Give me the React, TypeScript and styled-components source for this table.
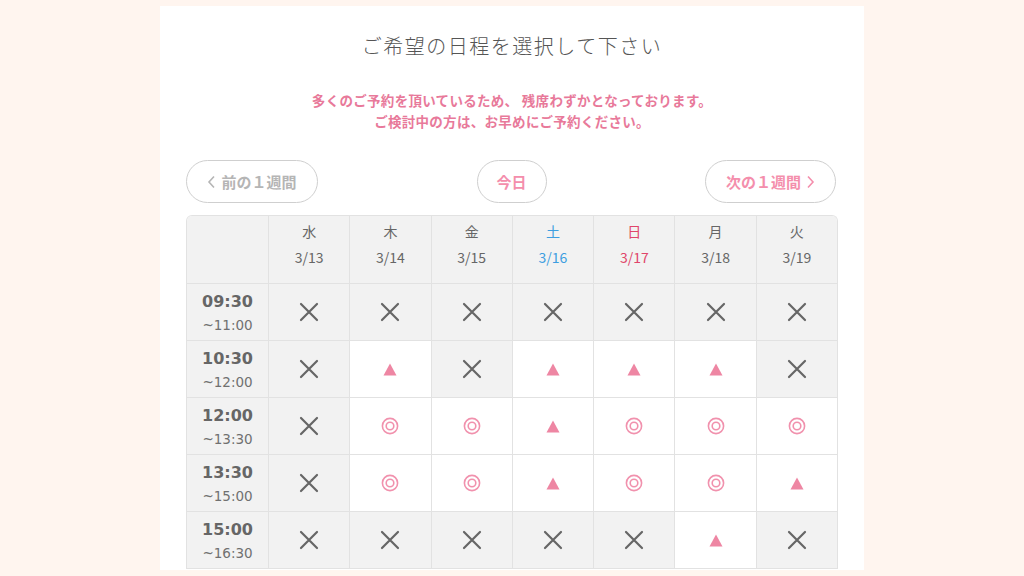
import React from "react";
import styled, { createGlobalStyle } from "styled-components";

const GlobalStyle = createGlobalStyle`
  html, body { margin: 0; padding: 0; }
  body {
    background: #fff5ef;
    font-family: "Noto Sans CJK JP", "Noto Sans", sans-serif;
    color: #555;
  }
`;

const Page = styled.div`
  width: 1024px;
  height: 576px;
  overflow: hidden;
  display: flex;
  justify-content: center;
  padding-top: 6px;
  box-sizing: border-box;
`;

const Panel = styled.div`
  width: 704px;
  height: 564px;
  background: #fff;
  padding: 25px 26px 0;
  box-sizing: border-box;
  display: flex;
  flex-direction: column;
  overflow: hidden;
`;

const Title = styled.h1`
  margin: 0;
  font-size: 20px;
  line-height: 30px;
  font-weight: 300;
  color: #555;
  text-align: center;
  letter-spacing: 1.5px;
`;

const Notice = styled.p`
  margin: 29px 0 0;
  font-size: 13.5px;
  line-height: 21px;
  font-weight: 700;
  color: #e8799a;
  text-align: center;
  letter-spacing: 0.3px;
`;

const Nav = styled.div`
  margin-top: 28px;
  display: flex;
  justify-content: space-between;
  align-items: center;
  padding-right: 2px;
`;

const NavButton = styled.button<{ $tone: "gray" | "pink"; $w: number }>`
  width: ${(p) => p.$w}px;
  height: 43px;
  border-radius: 22px;
  border: 1.5px solid #cfcfcf;
  background: #fff;
  font-family: "Noto Sans CJK JP", sans-serif;
  font-size: 15px;
  font-weight: 700;
  color: ${(p) => (p.$tone === "gray" ? "#b5b5b5" : "#f48eac")};
  display: flex;
  align-items: center;
  justify-content: center;
  gap: 5px;
  padding: 0;
  cursor: pointer;
`;

const Chevron = styled.svg`
  width: 9px;
  height: 14px;
`;

const TableWrap = styled.div`
  margin-top: 12px;
  width: 652px;
  box-sizing: border-box;
  border: 1px solid #e2e2e2;
  border-bottom: none;
  border-radius: 6px 6px 0 0;
  overflow: hidden;
`;

const Grid = styled.div`
  display: grid;
  grid-template-columns: 81px repeat(7, 1fr);
  grid-auto-rows: 57px;
  grid-template-rows: 68px;
`;

const HeadCell = styled.div<{ $color: string }>`
  background: #f2f2f2;
  border-left: 1px solid #e2e2e2;
  border-bottom: 1px solid #e2e2e2;
  display: flex;
  flex-direction: column;
  align-items: center;
  justify-content: flex-start;
  padding-top: 4px;
  gap: 3px;
  font-size: 14px;
  line-height: 23px;
  color: ${(p) => p.$color};
  &:first-child { border-left: none; }
`;

const TimeCell = styled.div`
  background: #f2f2f2;
  border-bottom: 1px solid #e2e2e2;
  display: flex;
  flex-direction: column;
  align-items: center;
  justify-content: center;
  padding-top: 3px;
  box-sizing: border-box;
  font-family: "DejaVu Sans", sans-serif;
  color: #666;
`;

const TimeStart = styled.span`
  font-size: 16px;
  font-weight: 700;
  line-height: 22px;
`;

const TimeEnd = styled.span`
  font-size: 13.5px;
  line-height: 24px;
  color: #707070;
`;

const SlotCell = styled.div<{ $open: boolean }>`
  background: ${(p) => (p.$open ? "#fff" : "#f2f2f2")};
  border-left: 1px solid #e2e2e2;
  border-bottom: 1px solid #e2e2e2;
  display: flex;
  align-items: center;
  justify-content: center;
`;

const Cross = () => (
  <svg width="20" height="20" viewBox="0 0 20 20">
    <path d="M2 2 L18 18 M18 2 L2 18" stroke="#666" strokeWidth="2.2" strokeLinecap="round" />
  </svg>
);

const Tri = () => (
  <svg width="14" height="13" viewBox="0 0 14 13">
    <polygon points="7,0.5 13.5,12.5 0.5,12.5" fill="#ee86a3" />
  </svg>
);

const DoubleCircle = () => (
  <svg width="18" height="18" viewBox="0 0 18 18">
    <circle cx="9" cy="9" r="7.6" fill="none" stroke="#f191ad" strokeWidth="1.6" />
    <circle cx="9" cy="9" r="3.8" fill="none" stroke="#f191ad" strokeWidth="1.6" />
  </svg>
);

type Mark = "x" | "t" | "o";

const days = [
  { w: "水", d: "3/13", c: "#666" },
  { w: "木", d: "3/14", c: "#666" },
  { w: "金", d: "3/15", c: "#666" },
  { w: "土", d: "3/16", c: "#3d9ee0" },
  { w: "日", d: "3/17", c: "#e0456a" },
  { w: "月", d: "3/18", c: "#666" },
  { w: "火", d: "3/19", c: "#666" },
];

const rows: { s: string; e: string; m: Mark[] }[] = [
  { s: "09:30", e: "~11:00", m: ["x", "x", "x", "x", "x", "x", "x"] },
  { s: "10:30", e: "~12:00", m: ["x", "t", "x", "t", "t", "t", "x"] },
  { s: "12:00", e: "~13:30", m: ["x", "o", "o", "t", "o", "o", "o"] },
  { s: "13:30", e: "~15:00", m: ["x", "o", "o", "t", "o", "o", "t"] },
  { s: "15:00", e: "~16:30", m: ["x", "x", "x", "x", "x", "t", "x"] },
];

const MarkIcon = ({ m }: { m: Mark }) =>
  m === "x" ? <Cross /> : m === "t" ? <Tri /> : <DoubleCircle />;

export default function App() {
  return (
    <>
      <GlobalStyle />
      <Page>
        <Panel>
          <Title>ご希望の日程を選択して下さい</Title>
          <Notice>
            多くのご予約を頂いているため、 残席わずかとなっております。
            <br />
            ご検討中の方は、お早めにご予約ください。
          </Notice>
          <Nav>
            <NavButton $tone="gray" $w={132}>
              <Chevron viewBox="0 0 9 14">
                <path d="M7 1.5 L2 7 L7 12.5" fill="none" stroke="#b5b5b5" strokeWidth="1.6" />
              </Chevron>
              前の１週間
            </NavButton>
            <NavButton $tone="pink" $w={70}>今日</NavButton>
            <NavButton $tone="pink" $w={131}>
              次の１週間
              <Chevron viewBox="0 0 9 14">
                <path d="M2 1.5 L7 7 L2 12.5" fill="none" stroke="#f48eac" strokeWidth="1.6" />
              </Chevron>
            </NavButton>
          </Nav>
          <TableWrap>
            <Grid>
              <HeadCell $color="#666" />
              {days.map((d) => (
                <HeadCell key={d.d} $color={d.c}>
                  <span>{d.w}</span>
                  <span>{d.d}</span>
                </HeadCell>
              ))}
              {rows.map((r) => (
                <React.Fragment key={r.s}>
                  <TimeCell>
                    <TimeStart>{r.s}</TimeStart>
                    <TimeEnd>{r.e}</TimeEnd>
                  </TimeCell>
                  {r.m.map((m, i) => (
                    <SlotCell key={i} $open={m !== "x"}>
                      <MarkIcon m={m} />
                    </SlotCell>
                  ))}
                </React.Fragment>
              ))}
            </Grid>
          </TableWrap>
        </Panel>
      </Page>
    </>
  );
}
